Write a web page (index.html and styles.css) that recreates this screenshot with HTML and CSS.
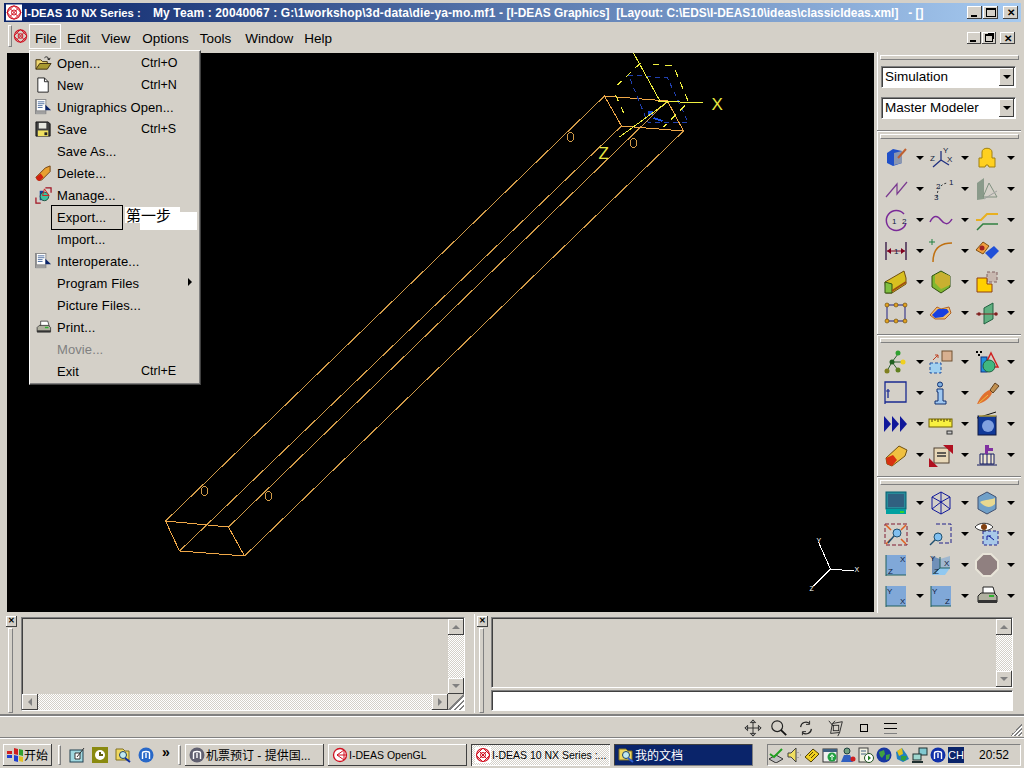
FILE: index.html
```html
<!DOCTYPE html>
<html lang="en">
<head>
<meta charset="utf-8">
<title>I-DEAS 10 NX Series</title>
<link rel="stylesheet" href="styles.css">
</head>
<body>
<svg class="sprite" width="0" height="0" aria-hidden="true">
  <defs>
    <symbol id="logo" viewBox="0 0 16 16"><rect width="16" height="16" fill="#fff"/><circle cx="8" cy="8" r="6.5" fill="none" stroke="#d01020" stroke-width="1.2"/><path d="M8 1 15 8 8 15 1 8Z M4 4 12 12 M12 4 4 12" fill="none" stroke="#d01020"/><circle cx="8" cy="8" r="2.5" fill="none" stroke="#d01020"/></symbol>
    <symbol id="logo-clear" viewBox="0 0 16 16"><circle cx="8" cy="8" r="6.5" fill="none" stroke="#d01020" stroke-width="1.2"/><path d="M8 1 15 8 8 15 1 8Z M4 4 12 12 M12 4 4 12" fill="none" stroke="#d01020"/><circle cx="8" cy="8" r="2.5" fill="none" stroke="#d01020"/></symbol>
    <symbol id="interop" viewBox="0 0 18 18"><rect x="0" y="0" width="12" height="16" fill="#8a8a8a"/><rect x="2" y="1" width="9" height="11" fill="#fff"/><path d="M3 3h7M3 5h7M3 7h5M3 9h5" stroke="#5070a0"/><path d="M17 12 11 6v6zM11 6l6 6" fill="#0a246a"/><rect x="1" y="13" width="10" height="3" fill="#a0a0a0"/></symbol>
    <symbol id="printer" viewBox="0 0 24 24"><path d="M8 3h10l2 7H8z" fill="#fff" stroke="#222"/><path d="M3 12l3-3h13l3 3v6H3z" fill="#b0b0a0" stroke="#222"/><rect x="3" y="16" width="19" height="3" fill="#333"/><rect x="14" y="11" width="5" height="2" fill="#30b030"/></symbol>
  </defs>
</svg>
<div class="app">
  <header class="title">
    <svg class="title-logo"><use href="#logo"/></svg>
    <span class="title-text"><span class="seg-a">I-DEAS 10 NX Series :</span><span class="seg-b">My Team : 20040067 : G:\1workshop\3d-data\die-ya-mo.mf1 - </span><span class="seg-c">[I-DEAS Graphics]&nbsp; [Layout: C:\EDS\I-DEAS10\ideas\classicIdeas.xml]&nbsp;&nbsp; - []</span></span>
    <div class="win-btns">
      <span class="wbtn"><i class="g-min"></i></span><span class="wbtn"><i class="g-max"></i></span><span class="wbtn wbtn-x">✕</span>
    </div>
  </header>

  <nav class="menubar">
    <span class="vgrip"></span>
    <svg class="menu-logo"><use href="#logo-clear"/></svg>
    <span class="mi mi-file">File</span><span class="mi mi-edit">Edit</span><span class="mi mi-view">View</span><span class="mi mi-opt">Options</span><span class="mi mi-tools">Tools</span><span class="mi mi-win">Window</span><span class="mi mi-help">Help</span>
    <div class="mdi-btns">
      <span class="mbtn"><i class="g-min"></i></span><span class="mbtn"><i class="g-rest"></i></span><span class="mbtn mbtn-x">✕</span>
    </div>
  </nav>

  <main class="main">
    <section class="viewport">
      <svg class="scene" viewBox="7 53 866 559">
        <g fill="none" stroke="#d09a48" stroke-width="1">
          <path d="M165 521 604 96M179 551 621 126M244 556 683 131M228 527 667 101"/>
          <g stroke="#f0a848"><path d="M165 521 228 527 244 556 179 551ZM604 96 667 101 683 131 621 126Z"/></g>
          <ellipse cx="570" cy="137" rx="3.5" ry="4.5"/><ellipse cx="633" cy="143" rx="3.5" ry="4.5"/><ellipse cx="204" cy="491" rx="3.5" ry="4.5"/><ellipse cx="268" cy="496" rx="3.5" ry="4.5"/>
        </g>
        <g fill="none" stroke="#2040b0" stroke-dasharray="5 4">
          <path d="M628 75 667 78 688 123 647 122Z"/>
        </g>
        <path d="M653 118 662 121" stroke="#1a50e0" stroke-width="2"/><circle cx="650" cy="113" r="2.5" fill="#1a50e0"/>
        <g fill="none" stroke="#f0f040">
          <path d="M633 53 660 102M657 101 702 103M667 102 619 137"/>
          <path d="M640 63 617 85M652 64 673 66 688 102 663 127M615 95 625 117" stroke-dasharray="7 6"/>
        </g>
        <text class="axis-y axis-big" x="711" y="110">X</text>
        <text class="axis-y axis-big" x="598" y="159">Z</text>
        <g fill="none" stroke="#fff"><path d="M830 569 818 542M830 569 853 571M830 569 813 586"/></g>
        <text class="axis-w" x="816" y="543">Y</text><text class="axis-w" x="854" y="572">X</text><text class="axis-w" x="809" y="591">Z</text>
      </svg>
    </section>

    <aside class="tools">
      <div class="grip"></div>
      <div class="combos">
        <div class="combo"><span class="combo-val">Simulation</span><span class="combo-btn"><i class="tri"></i></span></div>
        <div class="combo"><span class="combo-val">Master Modeler</span><span class="combo-btn"><i class="tri"></i></span></div>
      </div>
      <div class="sep"></div>
      <div class="grip"></div>
      <div class="tgrid tgrid-a">
        <div class="tc"><svg class="ic" viewBox="0 0 24 24"><path d="M3 7 9 3 18 5V17L9 20 3 17Z" fill="#2050c8"/><path d="M10 7 18 5V17L10 19Z" fill="#8a96b0"/><path d="M14 12 22 3" stroke="#c06030" stroke-width="2"/></svg><i class="tri"></i></div>
        <div class="tc"><svg class="ic" viewBox="0 0 24 24"><path d="M12 14V5M12 14 20 19M12 14 4 21" stroke="#203080" fill="none" stroke-width="1.3"/><text class="tiny" x="14" y="7">Y</text><text class="tiny" x="1" y="15">Z</text><text class="tiny" x="18" y="16">X</text></svg><i class="tri"></i></div>
        <div class="tc"><svg class="ic" viewBox="0 0 24 24"><path d="M7 6C7 1 17 1 17 6V12H20V21H14L13 19H11L10 21H4V12H7Z" fill="#ffd020" stroke="#a08010"/></svg><i class="tri"></i></div>
        <div class="tc"><svg class="ic" viewBox="0 0 24 24"><path d="M2 20 13 7V17L23 5" fill="none" stroke="#7a3a90" stroke-width="1.2"/></svg><i class="tri"></i></div>
        <div class="tc"><svg class="ic" viewBox="0 0 24 24"><path d="M8 20C8 12 12 7 18 6" fill="none" stroke="#333" stroke-dasharray="2 2"/><text class="tiny" x="20" y="8">1</text><text class="tiny" x="7" y="12">2</text><text class="tiny" x="5" y="23">3</text></svg><i class="tri"></i></div>
        <div class="tc"><svg class="ic" viewBox="0 0 24 24"><path d="M2 6 9 1V22L2 23Z" fill="#8a9a8a"/><path d="M14 6 22 20H8Z" fill="none" stroke="#809080"/><path d="M9 22 22 14" stroke="#a0a0a0"/></svg><i class="tri"></i></div>
        <div class="tc"><svg class="ic" viewBox="0 0 24 24"><path d="M22 15A10 10 0 1 1 20 6" fill="none" stroke="#7a2a98" stroke-width="1.5"/><text class="tiny" x="8" y="16">1</text><text class="tiny" x="18" y="16">2</text></svg><i class="tri"></i></div>
        <div class="tc"><svg class="ic" viewBox="0 0 24 24"><path d="M1 14C5 6 9 8 12 12S19 18 23 11" fill="none" stroke="#7a2a98" stroke-width="1.5"/></svg><i class="tri"></i></div>
        <div class="tc"><svg class="ic" viewBox="0 0 24 24"><path d="M1 12H6L12 6H23" fill="none" stroke="#e8b020" stroke-width="2"/><path d="M2 22 8 16H23" fill="none" stroke="#308040" stroke-width="1.5"/></svg><i class="tri"></i></div>
        <div class="tc"><svg class="ic" viewBox="0 0 24 24"><path d="M2 3V21M22 3V21" stroke="#301040" stroke-width="1.3"/><path d="M3 12H21" stroke="#800020"/><path d="M3 12 7 9V15ZM21 12 17 9V15Z" fill="#800020"/><text class="tiny" x="10" y="15">1</text></svg><i class="tri"></i></div>
        <div class="tc"><svg class="ic" viewBox="0 0 24 24"><path d="M4 23C4 10 10 4 23 4" fill="none" stroke="#c07010" stroke-width="1.5"/><path d="M0 3H6M3 0V6" stroke="#208040"/></svg><i class="tri"></i></div>
        <div class="tc"><svg class="ic" viewBox="0 0 24 24"><path d="M1 11 8 3 14 7 8 15Z" fill="#f0a040" stroke="#805010"/><circle cx="7" cy="9" r="2.5" fill="#a02020"/><path d="M10 14 19 7 24 12 16 20Z" fill="#2050d8"/></svg><i class="tri"></i></div>
        <div class="tc"><svg class="ic" viewBox="0 0 24 24"><path d="M1 12 20 1 22 8V14L8 23H2Z" fill="#d8c020" stroke="#705010"/><path d="M1 12V23H8V14Z" fill="#80c040" stroke="#305010"/><path d="M8 21 22 12" stroke="#a05010" stroke-width="2"/></svg><i class="tri"></i></div>
        <div class="tc"><svg class="ic" viewBox="0 0 24 24"><path d="M3 6 12 1 21 6V17L12 23 3 17Z" fill="#80b830" stroke="#305010"/><path d="M6 5 12 2 21 6V15L12 19 6 13Z" fill="#c8b030"/></svg><i class="tri"></i></div>
        <div class="tc"><svg class="ic" viewBox="0 0 24 24"><path d="M12 2H22V12H12Z" fill="#c8b8b0" stroke="#806060" stroke-dasharray="3 2"/><path d="M2 8H12V14H17V22H2Z" fill="#ffd000" stroke="#904010"/></svg><i class="tri"></i></div>
        <div class="tc"><svg class="ic" viewBox="0 0 24 24"><rect x="3" y="4" width="18" height="16" fill="none" stroke="#202080"/><g fill="#e0a020" stroke="#604000" stroke-width=".6"><circle cx="3" cy="4" r="2"/><circle cx="12" cy="4" r="2"/><circle cx="21" cy="4" r="2"/><circle cx="3" cy="20" r="2"/><circle cx="12" cy="20" r="2"/><circle cx="21" cy="20" r="2"/></g></svg><i class="tri"></i></div>
        <div class="tc"><svg class="ic" viewBox="0 0 24 24"><path d="M1 14 8 6 12 8 20 6 22 12 16 18 6 18Z" fill="#f0c070" stroke="#b06020"/><path d="M3 14 9 8 18 8 20 11 14 16 6 17Z" fill="#1840e0"/></svg><i class="tri"></i></div>
        <div class="tc"><svg class="ic" viewBox="0 0 24 24"><path d="M9 7 18 2V18L9 23Z" fill="#60b080" stroke="#206040"/><path d="M1 13H22" stroke="#802020"/><circle cx="4" cy="13" r="1.8" fill="#802020"/><circle cx="21" cy="13" r="1.8" fill="#802020"/></svg><i class="tri"></i></div>
      </div>
      <div class="sep"></div>
      <div class="grip"></div>
      <div class="tgrid tgrid-b">
        <div class="tc"><svg class="ic" viewBox="0 0 24 24"><path d="M14 4 8 12 3 21M8 12 14 20M8 12 19 12" stroke="#306030" fill="none"/><circle cx="14" cy="3" r="2.5" fill="#30a030"/><circle cx="8" cy="12" r="2.5" fill="#206020"/><circle cx="19" cy="12" r="2.5" fill="#f0d020"/><circle cx="3" cy="21" r="2.5" fill="#808020"/><circle cx="14" cy="20" r="2.5" fill="#608020"/></svg><i class="tri"></i></div>
        <div class="tc"><svg class="ic" viewBox="0 0 24 24"><rect x="13" y="1" width="10" height="10" fill="#d8b090" stroke="#705030"/><rect x="1" y="13" width="11" height="10" fill="#a0d0f0" stroke="#2050a0" stroke-dasharray="3 2"/><path d="M4 10 9 5M6 5H9V8" fill="none" stroke="#c04020"/></svg><i class="tri"></i></div>
        <div class="tc"><svg class="ic" viewBox="0 0 24 24"><rect x="6" y="7" width="6" height="15" fill="#2090e0" stroke="#103080"/><path d="M16 3 23 17H9Z" fill="none" stroke="#d02020" stroke-width="1.5"/><circle cx="14" cy="16" r="6" fill="#40b880" stroke="#206040"/><path d="M1 1h2v2H1zM5 1h2v2H5zM3 4h2v2H3z"/></svg><i class="tri"></i></div>
        <div class="tc"><svg class="ic" viewBox="0 0 24 24"><path d="M1 23V1H22V21H1" fill="none" stroke="#1a2a90" stroke-width="1.3"/><path d="M4 17V8" stroke="#1a2a90" stroke-width="1.3"/><path d="M2 10H6" stroke="#1a2a90"/></svg><i class="tri"></i></div>
        <div class="tc"><svg class="ic" viewBox="0 0 24 24"><circle cx="11" cy="3.5" r="2.5" fill="#80b0e0" stroke="#103070"/><path d="M8 8H14V20H17V23H6V20H9V11H8Z" fill="#a0c8f0" stroke="#103070"/></svg><i class="tri"></i></div>
        <div class="tc"><svg class="ic" viewBox="0 0 24 24"><path d="M15 9C10 10 5 16 2 23 9 22 16 16 17 12Z" fill="#e07030"/><path d="M4 22 13 14" stroke="#f0c040"/><path d="M15 9 20 2 24 5 18 12Z" fill="#c09050" stroke="#604020"/></svg><i class="tri"></i></div>
        <div class="tc"><svg class="ic" viewBox="0 0 24 24"><path d="M0 4 7 12 0 20ZM8 4 15 12 8 20ZM16 4 23 12 16 20Z" fill="#10189a"/></svg><i class="tri"></i></div>
        <div class="tc"><svg class="ic" viewBox="0 0 24 24"><rect x="0" y="7" width="23" height="8" fill="#f8f040" stroke="#706000"/><path d="M3 7v3M6 7v2M9 7v3M12 7v2M15 7v3M18 7v2M21 7v3" stroke="#504000"/><rect x="18" y="19" width="5" height="3" fill="#c8c8c8" stroke="#333"/></svg><i class="tri"></i></div>
        <div class="tc"><svg class="ic" viewBox="0 0 24 24"><path d="M2 6 21 0" stroke="#111"/><rect x="3" y="4" width="18" height="19" fill="#103898" stroke="#101840"/><circle cx="13" cy="14" r="6" fill="#80a0e0"/><path d="M4 4H21" stroke="#f0d030"/></svg><i class="tri"></i></div>
        <div class="tc"><svg class="ic" viewBox="0 0 24 24"><path d="M2 15 15 3 23 7 21 13 8 23 3 21Z" fill="#f0c040" stroke="#705010"/><path d="M2 15 9 12 13 17 8 23 3 21Z" fill="#d83010"/></svg><i class="tri"></i></div>
        <div class="tc"><svg class="ic" viewBox="0 0 24 24"><rect x="5" y="5" width="15" height="15" fill="#e8d8b8" stroke="#504030"/><path d="M8 10H17M8 13H17" stroke="#333" stroke-width="1.3"/><path d="M14 2H24V11Z M0 15V24H9Z" fill="#b01020"/></svg><i class="tri"></i></div>
        <div class="tc"><svg class="ic" viewBox="0 0 24 24"><path d="M5 11H19V21H5Z" fill="#f0e8d0" stroke="#101860"/><path d="M8 11V21M12 11V21M16 11V21M2 22H22" stroke="#101860"/><path d="M10 2H14V5H18V8H13V11H10Z" fill="#8030a0"/></svg><i class="tri"></i></div>
      </div>
      <div class="sep"></div>
      <div class="grip"></div>
      <div class="tgrid tgrid-c">
        <div class="tc"><svg class="ic" viewBox="0 0 24 24"><rect x="2" y="1" width="20" height="17" fill="#2a8a9a" stroke="#006070"/><rect x="4" y="3" width="16" height="13" fill="#306080"/><rect x="2" y="18" width="20" height="5" fill="#00a0a0"/><rect x="16" y="20" width="4" height="2" fill="#30d030"/></svg><i class="tri"></i></div>
        <div class="tc"><svg class="ic" viewBox="0 0 24 24"><path d="M3 6 12 1 21 6V18L12 23 3 18ZM3 6 12 11 21 6M12 11V23M12 1V11M3 18 12 11 21 18" fill="none" stroke="#10189a"/></svg><i class="tri"></i></div>
        <div class="tc"><svg class="ic" viewBox="0 0 24 24"><path d="M3 6 12 1 21 6V18L12 23 3 18Z" fill="#70a0c8" stroke="#405070"/><path d="M5 11C10 8 17 9 20 7V13C15 18 9 16 5 11Z" fill="#e8d890"/></svg><i class="tri"></i></div>
        <div class="tc"><svg class="ic" viewBox="0 0 24 24"><rect x="1" y="2" width="22" height="21" fill="none" stroke="#801830" stroke-dasharray="4 2"/><path d="M2 3 7 8M22 3 17 8M2 22 7 17M22 22 17 17" stroke="#e06020" stroke-width="1.5"/><circle cx="13" cy="11" r="4" fill="#80c0f0" stroke="#205070"/><path d="M10 14 4 21" stroke="#205070" stroke-width="1.5"/></svg><i class="tri"></i></div>
        <div class="tc"><svg class="ic" viewBox="0 0 24 24"><path d="M7 2H22V21H10" fill="none" stroke="#20208a" stroke-dasharray="4 2"/><circle cx="9" cy="15" r="4" fill="#80c0f0" stroke="#205070"/><path d="M6 18 1 23" stroke="#205070" stroke-width="1.5"/></svg><i class="tri"></i></div>
        <div class="tc"><svg class="ic" viewBox="0 0 24 24"><rect x="8" y="9" width="15" height="14" fill="#a8c8e8" stroke="#20208a" stroke-dasharray="3 2"/><path d="M0 5C4 0 14 0 18 5 14 10 4 10 0 5Z" fill="#fff" stroke="#333"/><circle cx="9" cy="5" r="3" fill="#804010"/><path d="M12 18V14H16M14 14 19 18" fill="none" stroke="#10189a"/></svg><i class="tri"></i></div>
        <div class="tc"><svg class="ic" viewBox="0 0 24 24"><rect x="2" y="2" width="20" height="20" fill="#80a8d8"/><path d="M2 2V23M2 22H22" stroke="#206060"/><text class="tiny" x="16" y="9">X</text><text class="tiny" x="4" y="21">Z</text></svg><i class="tri"></i></div>
        <div class="tc"><svg class="ic" viewBox="0 0 24 24"><path d="M3 3 11 6V15L3 22Z" fill="#7090b8"/><path d="M11 6 21 3V15H11Z" fill="#a0b8d0"/><path d="M11 15H21L16 22H3Z" fill="#90c8f0"/><path d="M11 4V15L4 21M11 15H21" fill="none" stroke="#206060"/><text class="tiny" x="1" y="8">Y</text><text class="tiny" x="15" y="13">X</text><text class="tiny" x="5" y="21">Z</text></svg><i class="tri"></i></div>
        <div class="tc"><svg class="ic" viewBox="0 0 24 24"><path d="M8 1H16L23 8V16L16 23H8L1 16V8Z" fill="#908080" stroke="#e8e4d8" stroke-width="2"/></svg><i class="tri"></i></div>
        <div class="tc"><svg class="ic" viewBox="0 0 24 24"><rect x="2" y="2" width="20" height="20" fill="#80a8d8"/><path d="M2 2V23M2 22H22" stroke="#206060"/><text class="tiny" x="3" y="10">Y</text><text class="tiny" x="16" y="20">X</text></svg><i class="tri"></i></div>
        <div class="tc"><svg class="ic" viewBox="0 0 24 24"><rect x="2" y="2" width="20" height="20" fill="#80a8d8"/><path d="M2 2V23M2 22H22" stroke="#206060"/><text class="tiny" x="3" y="10">Y</text><text class="tiny" x="16" y="20">Z</text></svg><i class="tri"></i></div>
        <div class="tc"><svg class="ic"><use href="#printer"/></svg><i class="tri"></i></div>
      </div>
    </aside>
  </main>

  <section class="lower">
    <div class="dock dock-l">
      <div class="dock-side"><span class="close-x">✕</span><span class="dock-grip"></span></div>
      <div class="sunken log">
        <div class="log-body">
          <div class="log-text"></div>
          <div class="vbar"><span class="sb"><i class="a-up"></i></span><span class="track"></span><span class="sb"><i class="a-down"></i></span></div>
        </div>
        <div class="hbar"><span class="sb"><i class="a-left"></i></span><span class="track"></span><span class="sb"><i class="a-right"></i></span><span class="corner"></span></div>
      </div>
    </div>
    <div class="dock dock-r">
      <div class="dock-side"><span class="close-x">✕</span><span class="dock-grip"></span></div>
      <div class="prompt">
        <div class="sunken prompt-log">
          <div class="log-text"></div>
          <div class="vbar"><span class="sb"><i class="a-up"></i></span><span class="track"></span><span class="sb"><i class="a-down"></i></span></div>
        </div>
        <div class="sunken prompt-input"></div>
      </div>
    </div>
  </section>

  <section class="status">
    <svg class="st st-1" viewBox="0 0 20 20"><path d="M10 1V19M1 10H19M10 1 7 4H13ZM10 19 7 16H13ZM1 10 4 7V13ZM19 10 16 7V13Z" fill="#fff" stroke="#222"/></svg>
    <svg class="st st-2" viewBox="0 0 20 20"><circle cx="8" cy="8" r="6" fill="none" stroke="#222" stroke-width="1.3"/><path d="M12 12 18 18" stroke="#111" stroke-width="2"/></svg>
    <svg class="st st-3" viewBox="0 0 20 20"><path d="M4 9A6 6 0 0 1 14 5M16 11A6 6 0 0 1 6 15" fill="none" stroke="#222" stroke-width="1.3"/><path d="M14 2V6H10M6 18V14H10" fill="none" stroke="#222"/></svg>
    <svg class="st st-4" viewBox="0 0 20 20"><path d="M6 5 17 3 14 15 4 16Z" fill="none" stroke="#222"/><path d="M2 2 7 8M14 15 12 19M6 5 9 2" stroke="#222"/><rect x="7" y="7" width="6" height="6" fill="none" stroke="#222"/></svg>
    <span class="st-square"></span>
    <span class="st-lines"></span>
    <span class="size-grip"></span>
  </section>

  <footer class="taskbar">
    <button class="start" type="button">
      <svg class="flag" viewBox="0 0 18 16"><path d="M1 4h5v3H1z" fill="#d02020"/><path d="M1 8h5v3H1z" fill="#2040d0"/><path d="M8 1l4 1v6l-4-1z" fill="#d02020"/><path d="M13 2l4 1v6l-4-1z" fill="#30a030"/><path d="M8 8l4 1v6l-4-1z" fill="#2040d0"/><path d="M13 9l4 1v5l-4-1z" fill="#e0c020"/></svg><span>开始</span>
    </button>
    <span class="tb-grip"></span>
    <div class="quick">
      <svg class="q" viewBox="0 0 16 16"><rect x="1" y="3" width="13" height="12" fill="#a0d8e0" stroke="#204050"/><path d="M6 12V6h5v6zM15 1 8 10" fill="#fff" stroke="#333"/></svg>
      <svg class="q" viewBox="0 0 16 16"><rect width="16" height="16" fill="#8a8a10"/><circle cx="8" cy="8" r="5" fill="#fff"/><path d="M8 5V8H11" fill="none" stroke="#606010" stroke-width="2"/></svg>
      <svg class="q" viewBox="0 0 16 16"><path d="M1 2H8L10 4H14V13H1Z" fill="#f0d860" stroke="#807020"/><circle cx="8" cy="8" r="3.5" fill="#c0e8f0" stroke="#204060"/><path d="M10 11 15 15" stroke="#1030a0" stroke-width="2"/></svg>
      <svg class="q" viewBox="0 0 16 16"><circle cx="8" cy="8" r="7.5" fill="#2868c8"/><path d="M4.5 12V6C4.5 4 11.5 4 11.5 6V12M8 6V11" fill="none" stroke="#fff" stroke-width="1.4"/></svg>
      <span class="more">»</span>
    </div>
    <span class="tb-grip tb-grip-2"></span>
    <div class="tasks">
      <div class="task"><svg class="task-ic" viewBox="0 0 16 16"><circle cx="8" cy="8" r="7.5" fill="#606070"/><path d="M4.5 12V6C4.5 4 11.5 4 11.5 6V12M8 6V11" fill="none" stroke="#fff" stroke-width="1.4"/></svg><span class="task-label">机票预订 - 提供国...</span></div>
      <div class="task"><svg class="task-ic" viewBox="0 0 16 16"><circle cx="8" cy="8" r="6.5" fill="#fff" stroke="#d01020" stroke-width="1.3"/><path d="M12 3 5 8 12 13ZM5 8H15" fill="none" stroke="#d01020"/></svg><span class="task-label task-latin">I-DEAS OpenGL</span></div>
      <div class="task task-on"><svg class="task-ic"><use href="#logo"/></svg><span class="task-label task-latin">I-DEAS 10 NX Series :...</span></div>
      <div class="task task-sel"><svg class="task-ic" viewBox="0 0 16 16"><path d="M1 2H8L10 4H14V13H1Z" fill="#f0d860" stroke="#807020"/><circle cx="8" cy="8" r="3.5" fill="#c0e8f0" stroke="#204060"/><path d="M10 11 15 15" stroke="#3060d0" stroke-width="2"/></svg><span class="task-label">我的文档</span></div>
    </div>
    <div class="tray">
      <svg class="tr" viewBox="0 0 16 16"><path d="M1 12 8 8 15 12 8 16Z" fill="#c0c0c0" stroke="#333"/><path d="M2 7 6 10 14 2" fill="none" stroke="#20a020" stroke-width="2"/></svg>
      <svg class="tr" viewBox="0 0 16 16"><path d="M2 6H5L10 1V15L5 10H2Z" fill="#f0e060" stroke="#404040"/><path d="M12 5V6M12 10V11M14 8H15" stroke="#808080"/></svg>
      <svg class="tr" viewBox="0 0 16 16"><path d="M1 10 9 2 15 7 7 15Z" fill="#f0d020" stroke="#504000"/><path d="M5 9 9 5M7 11 11 7" stroke="#504000"/></svg>
      <svg class="tr" viewBox="0 0 16 16"><rect x="1" y="2" width="14" height="13" fill="#f0f0f0" stroke="#333"/><rect x="1" y="2" width="14" height="3" fill="#406080"/><circle cx="10" cy="10" r="4.5" fill="#20a040"/><path d="M10 13V8M8 10 10 7.5 12 10" stroke="#fff" fill="none"/></svg>
      <svg class="tr" viewBox="0 0 16 16"><circle cx="7" cy="4" r="3" fill="#70a080" stroke="#204040"/><path d="M1 15 4 8H10L13 15Z" fill="#3060c0"/><circle cx="13" cy="12" r="2.5" fill="#d02020"/></svg>
      <svg class="tr" viewBox="0 0 16 16"><rect x="1" y="1" width="9" height="14" fill="#f0f0e0" stroke="#404040"/><path d="M3 4H8M3 7H8" stroke="#406080"/><circle cx="11" cy="11" r="4.5" fill="#fff" stroke="#205020"/><path d="M10 8.5 13 11 10 13.5Z" fill="#208020"/></svg>
      <svg class="tr" viewBox="0 0 16 16"><circle cx="8" cy="8" r="7.5" fill="#1838a0"/><path d="M3 5 8 3 9 7 6 11 4 9ZM10 8 14 7 13 12 10 13Z" fill="#40a040"/></svg>
      <svg class="tr" viewBox="0 0 16 16"><path d="M2 5 8 1 13 8 15 12 9 15 3 12Z" fill="#2080c0"/><path d="M3 4 8 1 9 7 5 9Z" fill="#e0c020"/><path d="M7 9 13 9 11 14 7 13Z" fill="#30a040"/></svg>
      <svg class="tr" viewBox="0 0 16 16"><rect x="7" y="1" width="8" height="7" fill="#80c8d0" stroke="#203030"/><rect x="1" y="7" width="8" height="6" fill="#a0d8d0" stroke="#203030"/><path d="M0 15H11" stroke="#203030" stroke-width="2"/></svg>
      <svg class="tr" viewBox="0 0 16 16"><circle cx="8" cy="8" r="7.5" fill="#1030a8"/><path d="M4.5 12V6C4.5 4 11.5 4 11.5 6V12M8 6V11" fill="none" stroke="#fff" stroke-width="1.4"/></svg>
      <span class="ch">CH</span>
      <span class="clock">20:52</span>
    </div>
  </footer>

  <div class="file-menu">
    <div class="row"><span class="ri"><svg viewBox="0 0 18 18"><path d="M1 15V5H6L8 7H13V9" fill="#f0d870" stroke="#403010"/><path d="M1 15 5 9H17L13 15Z" fill="#a89830" stroke="#403010"/><path d="M10 3C12 1 14 2 15 5M15 5 13 4M15 5 16 3" fill="none" stroke="#1a1a1a"/></svg></span><span class="rl">Open...</span><span class="rs">Ctrl+O</span></div>
    <div class="row"><span class="ri"><svg viewBox="0 0 18 18"><path d="M3 1H10L14 5V16H3Z" fill="#fff" stroke="#222"/><path d="M10 1V5H14" fill="none" stroke="#222"/></svg></span><span class="rl">New</span><span class="rs">Ctrl+N</span></div>
    <div class="row"><span class="ri"><svg viewBox="0 0 18 18"><use href="#interop"/></svg></span><span class="rl">Unigraphics Open...</span></div>
    <div class="row"><span class="ri"><svg viewBox="0 0 18 18"><path d="M1 1H14L16 3V16H1Z" fill="#404040" stroke="#111"/><rect x="4" y="2" width="8" height="6" fill="#e8e8e0"/><rect x="3" y="10" width="11" height="6" fill="#f0e060"/><rect x="10" y="12" width="3" height="3" fill="#222"/></svg></span><span class="rl">Save</span><span class="rs">Ctrl+S</span></div>
    <div class="row"><span class="ri"></span><span class="rl">Save As...</span></div>
    <div class="row"><span class="ri"><svg viewBox="0 0 18 18"><path d="M1 13 11 3 16 1 16 7 7 16 3 16Z" fill="#e8a030" stroke="#704010"/><path d="M1 13 6 9 9 13 5 17 2 16Z" fill="#d02010"/></svg></span><span class="rl">Delete...</span></div>
    <div class="row"><span class="ri"><svg viewBox="0 0 18 18"><path d="M11 1H17V6M1 11V17H6" fill="none" stroke="#a01020" stroke-width="1.3"/><rect x="5" y="4" width="4" height="10" fill="#1040a0"/><circle cx="10" cy="10" r="4.5" fill="#40c0a0" stroke="#205040"/><path d="M10 2 15 9H8Z" fill="none" stroke="#d02020"/></svg></span><span class="rl">Manage...</span></div>
    <div class="row"><span class="ri"></span><span class="rl export">Export...</span></div>
    <div class="row"><span class="ri"></span><span class="rl">Import...</span></div>
    <div class="row"><span class="ri"><svg viewBox="0 0 18 18"><use href="#interop"/></svg></span><span class="rl">Interoperate...</span></div>
    <div class="row"><span class="ri"></span><span class="rl">Program Files</span><i class="sub-arrow"></i></div>
    <div class="row"><span class="ri"></span><span class="rl">Picture Files...</span></div>
    <div class="row"><span class="ri"><svg viewBox="0 0 24 24"><use href="#printer"/></svg></span><span class="rl">Print...</span></div>
    <div class="row row-off"><span class="ri"></span><span class="rl">Movie...</span></div>
    <div class="row"><span class="ri"></span><span class="rl">Exit</span><span class="rs">Ctrl+E</span></div>
  </div>
  <div class="note"><span class="note-bg"></span><span class="note-text">第一步</span></div>
</div>
</body>
</html>
```

FILE: styles.css
```css
* { box-sizing: border-box; }
html, body { margin: 0; padding: 0; }
body { font-family: "Liberation Sans", Arial, sans-serif; font-size: 13px; color: #000; background: #d4d0c8; }
.sprite { position: absolute; }
.app { position: relative; width: 1024px; height: 768px; overflow: hidden; background: #d4d0c8; display: flex; flex-direction: column; }

/* title */
.title { flex: none; height: 19px; margin: 3px 3px 0 4px; display: flex; align-items: center; background: linear-gradient(90deg, #0a246a, #a6caf0); }
.title-logo { width: 16px; height: 17px; margin: 0 2px 0 2px; flex: none; }
.title-text { color: #fff; font-weight: bold; font-size: 12px; white-space: pre; flex: 1; overflow: hidden; }
.seg-a { display: inline-block; width: 129px; font-size: 11.3px; }
.seg-b { letter-spacing: .12px; }
.seg-c { letter-spacing: 0; font-size: 11.9px; }
.win-btns { display: flex; align-items: center; padding-right: 3px; }
.wbtn { width: 15px; height: 13px; display: flex; align-items: center; justify-content: center; background: #d4d0c8; box-shadow: inset -1px -1px 0 #404040, inset 1px 1px 0 #fff; margin-right: 1px; font-size: 10px; font-weight: bold; position: relative; }
.wbtn-x { margin-left: 4px; margin-right: 0; }
.g-min { display: block; width: 6px; height: 2px; background: #000; margin-top: 6px; margin-right: 2px; }
.g-max { display: block; width: 10px; height: 9px; border: 1px solid #000; border-top-width: 2px; }
.g-rest { display: block; width: 8px; height: 8px; border: 1px solid #000; border-top-width: 2px; box-shadow: 2px -2px 0 -1px #000; }

/* menu */
.menubar { flex: none; height: 28px; display: flex; align-items: center; position: relative; padding-left: 8px; }
.vgrip { width: 4px; height: 22px; border: 1px solid; border-color: #fff #808080 #808080 #fff; flex: none; }
.menu-logo { width: 15px; height: 16px; margin-left: 1px; flex: none; }
.mi { font-size: 13.5px; flex: none; padding-top: 4px; }
.mi-file { width: 32px; height: 25px; line-height: 25px; padding: 2px 0 0 6px; margin-left: 1px; margin-top: 1px; box-shadow: inset 1px 1px 0 #fff, inset -1px 0 0 #fff, inset 0 -1px 0 #fff; }
.mi-edit { margin-left: 6px; }
.mi-view { margin-left: 11px; }
.mi-opt { margin-left: 12px; }
.mi-tools { margin-left: 11px; }
.mi-win { margin-left: 14px; }
.mi-help { margin-left: 11px; }
.mdi-btns { margin-left: auto; display: flex; padding-right: 9px; padding-top: 4px; }
.mbtn { width: 14px; height: 12px; display: flex; align-items: center; justify-content: center; background: #d4d0c8; box-shadow: inset -1px -1px 0 #404040, inset 1px 1px 0 #fff; margin-right: 1px; font-size: 10px; font-weight: bold; }
.mbtn-x { margin: 0 0 0 3px; width: 15px; }

/* main */
.main { flex: none; height: 564px; display: flex; padding: 3px 0 2px 7px; }
.viewport { width: 867px; height: 559px; background: #000; flex: none; }
.scene { display: block; width: 100%; height: 100%; shape-rendering: crispEdges; }
.axis-y { fill: #e8e840; }
.axis-big { font-size: 17px; }
.axis-w { fill: #fff; font-size: 7px; }

.tools { width: 144px; height: 561px; margin: -1px 0 0 3px; flex: none; border-left: 1px solid #fff; padding-top: 3px; display: flex; flex-direction: column; }
.grip { height: 5px; margin: 0 2px 0 2px; flex: none; border: 1px solid; border-color: #fff #808080 #808080 #fff; }
.combos { padding: 6px 5px 0 3px; height: 70px; display: flex; flex-direction: column; gap: 9px; flex: none; }
.combo { height: 22px; border: 1px solid; border-color: #808080 #fff #fff #808080; box-shadow: inset 1px 1px 0 #404040; background: #fff; display: flex; align-items: stretch; }
.combo-val { flex: 1; padding-left: 3px; line-height: 20px; font-size: 13.5px; }
.combo-btn { width: 15px; margin: 1px 1px 1px 0; background: #d4d0c8; box-shadow: inset -1px -1px 0 #404040, inset 1px 1px 0 #fff; display: flex; align-items: center; justify-content: center; }
.sep { height: 2px; border-top: 1px solid #808080; border-bottom: 1px solid #fff; flex: none; margin-left: -1px; }
.sep + .grip { margin-top: 2px; }
.tgrid { display: grid; grid-template-columns: 45px 46px 45px; grid-auto-rows: 31px; padding-left: 6px; flex: none; }
.tgrid-a { padding-top: 3px; height: 195px; }
.tgrid-b { padding-top: 3px; height: 133px; }
.tgrid-c { padding-top: 2px; }
.tc { display: flex; align-items: center; gap: 8px; }
.ic { width: 24px; height: 24px; flex: none; overflow: visible; }
.tiny { font-size: 8px; fill: #102040; }
.tri { display: block; width: 0; height: 0; border-left: 4px solid transparent; border-right: 4px solid transparent; border-top: 4px solid #000; flex: none; }

/* lower docks */
.lower { flex: none; height: 102px; display: flex; padding-left: 6px; border-bottom: 2px solid #808080; box-shadow: 0 1px 0 #fff; }
.dock { display: flex; flex: none; height: 99px; }
.dock-l { width: 468px; }
.dock-r { width: 544px; border-left: 1px solid #fff; padding-left: 2px; margin-left: 0; }
.dock-side { width: 15px; display: flex; flex-direction: column; flex: none; padding-top: 2px; }
.close-x { width: 11px; height: 11px; line-height: 10px; text-align: center; font-size: 8px; font-weight: bold; background: #d4d0c8; box-shadow: inset -1px -1px 0 #404040, inset 1px 1px 0 #fff; }
.dock-grip { width: 5px; margin: 1px 0 0 2px; flex: 1; border: 1px solid; border-color: #fff #808080 #808080 #fff; }
.sunken { border: 1px solid; border-color: #808080 #fff #fff #808080; box-shadow: inset 1px 1px 0 #404040; }
.log { width: 444px; height: 94px; margin-top: 3px; display: flex; flex-direction: column; }
.log-body { flex: 1; display: flex; min-height: 0; }
.log-text { flex: 1; }
.vbar { width: 16px; display: flex; flex-direction: column; margin-top: 1px; }
.hbar { height: 16px; display: flex; }
.track { flex: 1; background: repeating-conic-gradient(#fff 0 25%, #d4d0c8 0 50%) 0 0 / 2px 2px; }
.sb { width: 16px; height: 16px; flex: none; background: #d4d0c8; box-shadow: inset -1px -1px 0 #404040, inset 1px 1px 0 #fff; display: flex; align-items: center; justify-content: center; }
.corner { width: 16px; background: linear-gradient(135deg, transparent 50%, #808080 50% 58%, #fff 58% 66%, #808080 66% 74%, #fff 74% 82%, #808080 82% 90%, #fff 90%); }
.a-up, .a-down, .a-left, .a-right { display: block; width: 0; height: 0; border: 4px solid transparent; }
.a-up { border-bottom-color: #808080; border-top-width: 0; }
.a-down { border-top-color: #808080; border-bottom-width: 0; }
.a-left { border-right-color: #808080; border-left-width: 0; }
.a-right { border-left-color: #808080; border-right-width: 0; }
.prompt { width: 523px; margin-left: -1px; padding-top: 3px; display: flex; flex-direction: column; gap: 2px; }
.prompt-log { height: 71px; width: 522px; display: flex; }
.prompt-input { height: 21px; background: #fff; width: 522px; }

/* status */
.status { flex: none; height: 20px; margin-top: 1px; padding-top: 2px; display: flex; align-items: center; position: relative; padding-left: 744px; }
.st { flex: none; width: 18px; height: 18px; }
.st-2 { margin-left: 8px; }
.st-3 { margin-left: 9px; }
.st-4 { margin-left: 12px; }
.st-square { width: 8px; height: 8px; border: 1px solid #000; margin-left: 15px; flex: none; }
.st-lines { width: 13px; height: 11px; margin-left: 16px; border-top: 1px solid #000; border-bottom: 1px solid #808080; background: linear-gradient(#000, #000) center / 100% 1px no-repeat; flex: none; }
.size-grip { position: absolute; right: 2px; bottom: 1px; width: 12px; height: 12px; background: linear-gradient(135deg, transparent 50%, #808080 50% 58%, #fff 58% 66%, #808080 66% 74%, #fff 74% 82%, #808080 82% 90%, #fff 90%); }

/* taskbar */
.taskbar { flex: none; height: 31px; margin-top: 0; border-top: 1px solid #808080; display: flex; align-items: center; padding: 3px 3px 0 3px; font-size: 12px; font-family: "Liberation Sans", "Noto Sans CJK SC", sans-serif; box-shadow: inset 0 1px 0 #fff; }
.start { width: 49px; height: 22px; padding: 0 0 0 3px; border: 0; background: #d4d0c8; box-shadow: inset -1px -1px 0 #404040, inset 1px 1px 0 #fff; display: flex; align-items: center; font: 12px "Noto Sans CJK SC", sans-serif; flex: none; color: #000; }
.flag { width: 18px; height: 16px; flex: none; }
.tb-grip { width: 3px; height: 20px; margin-left: 6px; flex: none; border: 1px solid; border-color: #fff #808080 #808080 #fff; }
.quick { display: flex; align-items: center; margin-left: 8px; flex: none; width: 109px; gap: 7px; }
.q { width: 16px; height: 16px; flex: none; }
.more { font-size: 14px; font-weight: bold; margin-top: -6px; margin-left: 1px; }
.tb-grip-2 { margin-left: 0; }
.tasks { display: flex; margin-left: 4px; gap: 4px; flex: none; }
.task { width: 139px; height: 22px; display: flex; align-items: center; background: #d4d0c8; box-shadow: inset -1px -1px 0 #404040, inset 1px 1px 0 #fff; padding-left: 4px; gap: 1px; white-space: nowrap; overflow: hidden; flex: none; }
.task-latin { font-size: 10.5px; }
.task-ic { width: 16px; height: 16px; flex: none; }
.task-on { background: repeating-conic-gradient(#fff 0 25%, #d4d0c8 0 50%) 0 0 / 2px 2px; box-shadow: inset 1px 1px 0 #404040, inset -1px -1px 0 #fff; font-weight: normal; }
.task-sel { background: #0a246a; color: #fff; box-shadow: inset -1px -1px 0 #808080, inset 1px 1px 0 #404040; }
.tray { margin-left: 14px; width: 254px; height: 22px; display: flex; align-items: center; border: 1px solid; border-color: #808080 #fff #fff #808080; padding-left: 0; flex: none; gap: 2px; }
.tr { width: 16px; height: 16px; flex: none; }
.ch { background: #0a246a; color: #fff; width: 16px; height: 16px; line-height: 16px; text-align: center; font-size: 11px; flex: none; overflow: hidden; }
.clock { margin-left: 13px; font-size: 12px; }

/* file menu overlay */
.file-menu { position: absolute; left: 29px; top: 50px; width: 172px; height: 335px; padding: 1px 0 0 1px; background: #d4d0c8; border: 1px solid; border-color: #fff #404040 #404040 #fff; box-shadow: inset -1px -1px 0 #808080; }
.row { height: 22px; display: flex; align-items: center; position: relative; font-size: 13px; white-space: nowrap; }
.ri { width: 26px; flex: none; padding-left: 4px; display: flex; align-items: center; }
.ri svg { width: 17px; height: 17px; display: block; overflow: visible; }
.rl { flex: none; letter-spacing: .1px; }
.rs { position: absolute; left: 110px; font-size: 12.5px; }
.row-off { color: #808080; }
.sub-arrow { position: absolute; left: 157px; top: 6px; width: 0; height: 0; border: 4px solid transparent; border-left-color: #000; border-right-width: 0; }
.export { position: relative; }
.export::after { content: ""; position: absolute; left: -6px; top: -5px; width: 70px; height: 23px; border: 1px solid #000; }
.note { position: absolute; left: 125px; top: 207px; width: 72px; height: 23px; }
.note-bg { position: absolute; left: 15px; top: 5px; width: 57px; height: 18px; background: #fff; }
.note-text { position: absolute; left: 0; top: 0; width: 55px; height: 16px; line-height: 16px; background: #fff; font: 15px/16px "Noto Sans CJK SC", sans-serif; padding-left: 1px; }
```
